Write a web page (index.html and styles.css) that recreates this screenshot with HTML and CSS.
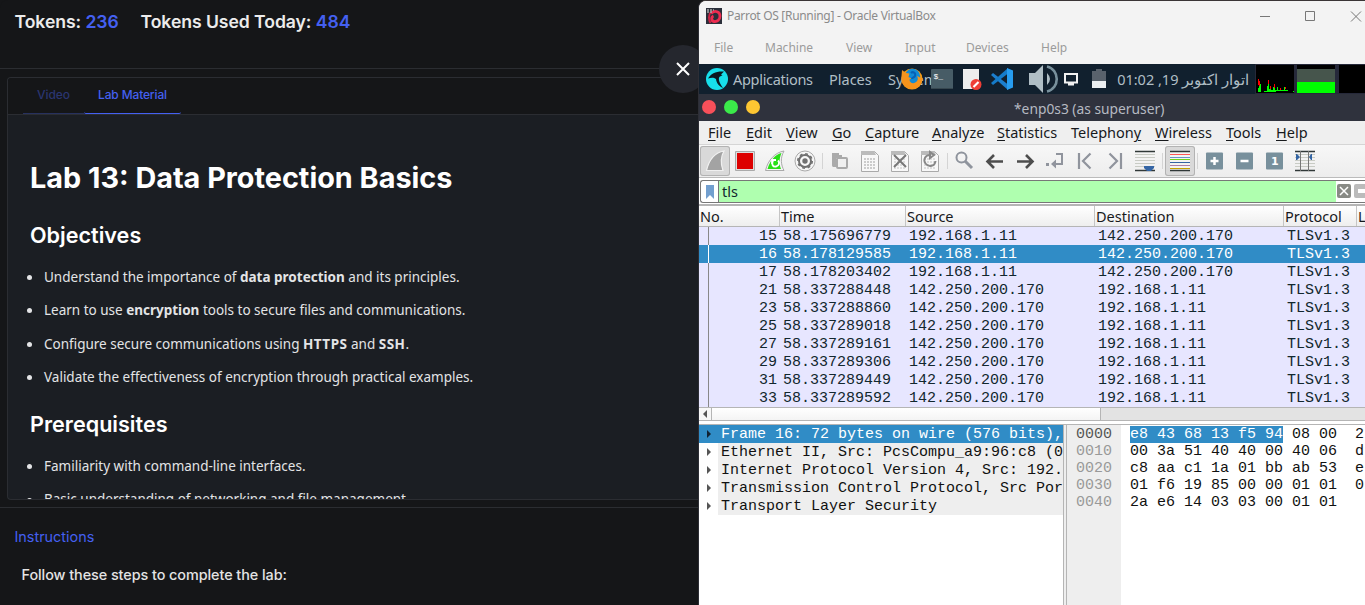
FILE: index.html
```html
<!DOCTYPE html>
<html lang="en">
<head>
<meta charset="utf-8">
<title>Lab 13</title>
<link rel="stylesheet" href="styles.css">
</head>
<body>
<div class="screen">
<main class="lab">
  <header class="tokens"><span class="tok1">Tokens: <b>236</b></span><span class="tok2">Tokens Used Today: <b>484</b></span></header>
  <section class="card">
    <nav class="tabs"><span class="tab video">Video</span><span class="tab active">Lab Material</span></nav>
    <div class="material">
      <h1>Lab 13: Data Protection Basics</h1>
      <h2 class="obj">Objectives</h2>
      <ul>
        <li><span class="l1">Understand the importance of <b>data protection</b> and its principles.</span></li>
        <li><span class="l2">Learn to use <b>encryption</b> tools to secure files and communications.</span></li>
        <li><span class="l3">Configure secure communications using <b>HTTPS</b> and <b>SSH</b>.</span></li>
        <li><span class="l4">Validate the effectiveness of encryption through practical examples.</span></li>
      </ul>
      <h2 class="pre">Prerequisites</h2>
      <ul>
        <li><span class="l5">Familiarity with command-line interfaces.</span></li>
        <li><span class="l6">Basic understanding of networking and file management.</span></li>
      </ul>
    </div>
  </section>
  <section class="instructions">
    <h3>Instructions</h3>
    <p>Follow these steps to complete the lab:</p>
  </section>
  <button class="close" aria-label="Close"><svg width="16" height="16" viewBox="0 0 16 16"><path d="M2 2l12 12M14 2L2 14" stroke="#fff" stroke-width="2" fill="none"/></svg></button>
</main>

<section class="vm">
  <header class="titlebar">
    <svg width="16" height="16" viewBox="0 0 16 16"><rect width="16" height="16" fill="#2b2f3a"/><path d="M5 5.500c4-4 9-1.500 9 2.500 0 4-3 6-6 5.500S5 9 7.500 8" fill="none" stroke="#ee2c50" stroke-width="2.800"/><path d="M4.500 4.500C2.500 7 2.500 12 4.500 15" fill="none" stroke="#c92445" stroke-width="2"/><path d="M1 2h7M1 4h5" stroke="#aaa" stroke-width="1.500" stroke-dasharray="2 1"/></svg>
    <span class="vmtitle">Parrot OS [Running] - Oracle VirtualBox</span>
    <svg class="winctl" width="106" height="12" viewBox="0 0 106 12"><path d="M0 6.500h10M45.500 1.500h9v9h-9zM91 1.500l10 10M101 1.500l-10 10" stroke="#777" fill="none"/></svg>
  </header>
  <nav class="vmmenu"><span>File</span><span>Machine</span><span>View</span><span>Input</span><span>Devices</span><span>Help</span></nav>

  <div class="panel">
    <svg class="parrot" width="22" height="22" viewBox="0 0 22 22"><circle cx="11" cy="11" r="11" fill="#17dfeb"/><path d="M2 10.500C5 5.500 10 3 18 3.500l-3 3 1.500.8-2.500 1.200c-2 1-1.500 5.500 3 11.500-4.500-2-6.500-5-7-9-2.500-2-5-1.500-8-.5z" fill="#0b1820"/></svg>
    <span class="p-app">Applications</span><span class="p-places">Places</span>
    <span class="p-system">System
      <svg class="firefox" width="22" height="22" viewBox="0 0 22 22"><circle cx="11" cy="11" r="10.500" fill="#f39a16"/><circle cx="11.500" cy="8.500" r="7.700" fill="#128bd6"/><path d="M1 2l4 3 3.500.5-1 3.500 3 1.500-2 1c0 4 5 5 7.500 1.500 1.500-2 .5-4 0-5 2 .5 3.500 2.500 5.500 2 0 6.500-4.500 11-10.500 11C3 21-.5 14 .5 8z" fill="#f7941c"/><path d="M10 5c2-2 5 0 4 3-1 2-3 1-3 3" stroke="#0761b6" fill="none" stroke-width="2"/></svg>
    </span>
    <svg class="term" width="22" height="20" viewBox="0 0 22 20"><rect width="22" height="20" rx="1" fill="#475c66"/><path d="M0 19h22v1H0z" fill="#37474f"/><text x="2.500" y="9.500" class="prompt">$_</text></svg>
    <svg class="note" width="19" height="21" viewBox="0 0 19 21"><path d="M0 0h16v20H0z" fill="#eee"/><circle cx="13" cy="15.500" r="5.500" fill="#ef3e36"/><path d="M10.500 18l5-5" stroke="#fff" stroke-width="2.200"/></svg>
    <svg class="code" width="22" height="22" viewBox="0 0 22 22"><path d="M0 7l2-2 15 11.500V22z" fill="#1c7fcf"/><path d="M0 15l2 2 15-11.500V0z" fill="#157bc9"/><path d="M16 0l6 2.500v17L16 22z" fill="#279df0"/></svg>
    <svg class="vol" width="30" height="28" viewBox="0 0 30 28"><path d="M0 8h6l8-8v28l-8-8H0z" fill="#b0bec5"/><path d="M18 8q6 6 0 12z" fill="#b0bec5"/><path d="M18 1.500c13 3 13 22 0 25" fill="none" stroke="#78909c" stroke-width="2.600"/></svg>
    <svg class="net" width="14" height="13" viewBox="0 0 14 13"><path d="M1 1h12v8.500H1zM4 11.500h6" stroke="#f1f1f1" stroke-width="2" fill="none"/></svg>
    <svg class="bat" width="14" height="20" viewBox="0 0 14 20"><path d="M0 2h4V0h6v2h4v17H0z" fill="#59626c"/><path d="M0 12h14v7H0z" fill="#eceff1"/></svg>
    <span class="clock" dir="rtl">اتوار اکتوبر 19, 01:02</span>
    <svg class="monitors" width="121" height="30" viewBox="0 0 121 30" shape-rendering="crispEdges"><path d="M0 0h121v30H0z" fill="#26293a"/><path d="M1 1h38v28H1zM42 1h38v28H42zM84 1h37v28H84z" fill="#000"/><path d="M1 28h2v-4h1v-3h1v-1h1v8zM9 28v-1h3v-5h1v-5h1v8h1v-2h1v3h2v-3h1v-2h1v5h2v-3h1v3h2v-2h1v2h3v-3h1v3h3v1zM38 27h1v1h-1z" fill="#0f0"/><path d="M3 15h1v6H3zM4 17h1v5H4zM13 16h1v4h-1zM15 22h1v3h-1zM19 20h1v4h-1zM25 24h1v2h-1zM30 23h1v2h-1z" fill="#f00"/><path d="M42 5h38v13H42z" fill="#46554c"/><path d="M42 18h38v11H42z" fill="#0f0"/></svg>
  </div>

  <header class="mac"><i class="r"></i><i class="g"></i><i class="y"></i><span>*enp0s3 (as superuser)</span></header>
  <nav class="wmenu"><span><u>F</u>ile</span><span><u>E</u>dit</span><span><u>V</u>iew</span><span><u>G</u>o</span><span><u>C</u>apture</span><span><u>A</u>nalyze</span><span><u>S</u>tatistics</span><span>Telephon<u>y</u></span><span><u>W</u>ireless</span><span><u>T</u>ools</span><span><u>H</u>elp</span></nav>

  <div class="toolbar">
    <span class="tool pressed"><svg viewBox="0 0 30 30"><path d="M6.500 24.500C9 14 15 6.500 24 5c-4 7-3 14-1 19.500z" fill="#a3a3a3" stroke="#f0f0f0" stroke-width="1.200"/></svg></span>
    <span class="tool"><svg viewBox="0 0 30 30"><path d="M5.500 5.500h19v19h-19z" fill="#ddd" stroke="#aaa"/><path d="M7 7h16v16H7z" fill="#d00"/></svg></span>
    <span class="tool"><svg viewBox="0 0 30 30"><path d="M5.500 24.500C8 14 15 6.500 24 5c-4 7-3 14 0 19.500z" fill="#f5f5f5" stroke="#aaa"/><path d="M7.500 23C10 14.500 15 8.500 21.500 7c-2.500 6-2.500 11-.5 16z" fill="#29df16"/><path d="M13 14.500c-2 4 0 6.500 3 6 3-.5 4-4 2-6M12 18v-4h4" fill="none" stroke="#fff" stroke-width="1.800"/></svg></span>
    <span class="tool"><svg viewBox="0 0 30 30"><circle cx="15" cy="15" r="10" fill="#f7f7f7" stroke="#aaa"/><circle cx="15" cy="15" r="6" fill="none" stroke="#707070" stroke-width="2"/><circle cx="15" cy="15" r="7.200" fill="none" stroke="#707070" stroke-width="1.600" stroke-dasharray="2.800 2.850"/><circle cx="15" cy="15" r="2.700" fill="#707070"/></svg></span>
    <i class="sep"></i>
    <span class="tool"><svg viewBox="0 0 30 30"><path d="M7 7h7v2h3v3h-6v9H9c-1.500 0-2-.5-2-2z" fill="#aaa"/><rect x="12" y="12" width="10" height="10" rx="1" fill="#f0f0f0" stroke="#aaa" stroke-width="2"/></svg></span>
    <span class="tool"><svg viewBox="0 0 30 30"><path d="M6.500 5.500h13l4 4v16h-17z" fill="#f8f8f8" stroke="#aaa"/><path d="M6 5h13l2 4H6z" fill="#bbb"/><path d="M9 13h12M9 16h12M9 19h12M9 22h12" stroke="#ccc" stroke-width="2" stroke-dasharray="2 1"/></svg></span>
    <span class="tool"><svg viewBox="0 0 30 30"><path d="M6.500 5.500h13l4 4v16h-17z" fill="#f8f8f8" stroke="#aaa"/><path d="M6 5h13l2 4H6z" fill="#bbb"/><path d="M9 13h12M9 16h12M9 19h12M9 22h12" stroke="#ddd" stroke-width="2" stroke-dasharray="2 1"/><path d="M9 9l12 12M21 9L9 21" stroke="#777" stroke-width="2"/></svg></span>
    <span class="tool"><svg viewBox="0 0 30 30"><path d="M6.500 5.500h13l4 4v16h-17z" fill="#f8f8f8" stroke="#aaa"/><path d="M6 5h13l2 4H6z" fill="#bbb"/><path d="M9 13h12M9 16h12M9 19h12M9 22h12" stroke="#ddd" stroke-width="2" stroke-dasharray="2 1"/><path d="M15 9c-5 0-7 5-4.500 8.500C14 22 20 20 20.500 15M15 6v6l4-3z" fill="none" stroke="#888" stroke-width="2"/></svg></span>
    <i class="sep"></i>
    <span class="tool"><svg viewBox="0 0 30 30"><circle cx="11.500" cy="11.500" r="5" fill="none" stroke="#8f949d" stroke-width="2"/><path d="M15 15l7 7" stroke="#8f949d" stroke-width="3"/></svg></span>
    <span class="tool"><svg viewBox="0 0 30 30"><path d="M23 15.500H8M14 9l-6.500 6.500L14 22" fill="none" stroke="#4d4d4d" stroke-width="2.600"/></svg></span>
    <span class="tool"><svg viewBox="0 0 30 30"><path d="M7 15.500h15M16 9l6.500 6.500L16 22" fill="none" stroke="#4d4d4d" stroke-width="2.600"/></svg></span>
    <span class="tool"><svg viewBox="0 0 30 30"><path d="M16 8h6v10H12" fill="none" stroke="#90949d" stroke-width="2"/><path d="M11 18l5-4.500v9z" fill="#90949d"/><path d="M6 17h3v3H6z" fill="#90949d"/></svg></span>
    <span class="tool"><svg viewBox="0 0 30 30"><path d="M9 7v16M20.500 7.500L13 15l7.500 7.500" fill="none" stroke="#90949d" stroke-width="2.200"/></svg></span>
    <span class="tool"><svg viewBox="0 0 30 30"><path d="M21 7v16M9.500 7.500L17 15l-7.500 7.500" fill="none" stroke="#90949d" stroke-width="2.200"/></svg></span>
    <span class="tool"><svg viewBox="0 0 30 30"><path d="M5 5.500h20M5 24.500h20" stroke="#303838" stroke-width="1.300"/><path d="M5 8.500h20M5 11.500h20M5 14.500h20M5 17.500h20M5 20.500h20" stroke="#c8cbc4"/><path d="M14 20h10v2l-3 3h-4l-3-3z" fill="#3465a4"/></svg></span>
    <i class="sep"></i>
    <span class="tool pressed"><svg viewBox="0 0 30 30"><path d="M5 5h20v20H5z" fill="#f4f4f2"/><path d="M5 5.500h20M5 24.500h20" stroke="#303838" stroke-width="1.300"/><path d="M5 8.500h20" stroke="#ff5555"/><path d="M5 11.500h20" stroke="#6a93c4"/><path d="M5 13.500h20" stroke="#73d216"/><path d="M5 16.500h20" stroke="#3465a4"/><path d="M5 19.500h20" stroke="#ad7fa8"/><path d="M5 22.500h20" stroke="#c4a000"/></svg></span>
    <i class="sep"></i>
    <span class="tool"><svg viewBox="0 0 30 30"><rect x="6" y="6.500" width="17" height="17" rx="1" fill="#78909c"/><path d="M10.500 15h8M14.500 11v8" stroke="#fff" stroke-width="2.500"/></svg></span>
    <span class="tool"><svg viewBox="0 0 30 30"><rect x="6" y="6.500" width="17" height="17" rx="1" fill="#78909c"/><path d="M10.500 15h8" stroke="#fff" stroke-width="2.500"/></svg></span>
    <span class="tool"><svg viewBox="0 0 30 30"><rect x="6" y="6.500" width="17" height="17" rx="1" fill="#78909c"/><text x="11" y="19" class="one">1</text></svg></span>
    <span class="tool"><svg viewBox="0 0 30 30"><path d="M5 5.500h20M5 24.500h20" stroke="#303838" stroke-width="1.300"/><path d="M5 8.500h20M5 11.500h20M5 14.500h20M5 17.500h20M5 20.500h20" stroke="#c8cbc4"/><path d="M10.500 5v20M18.500 5v20" stroke="#777"/><path d="M6 8h1l3 3-3 3H6zM22 8h-1l-2 3 2 3h1z" fill="#3465a4"/></svg></span>
  </div>

  <div class="filter"><span class="bookmark"><svg width="10" height="14" viewBox="0 0 10 14"><path d="M1 0h8v14l-4-4-4 4z" fill="#729fcf"/></svg></span><span class="query">tls</span><svg class="clear" width="28" height="14" viewBox="0 0 28 14"><rect width="14" height="14" rx="2" fill="#888a85"/><path d="M3 3l8 8M11 3l-8 8" stroke="#fff" stroke-width="1.500"/><rect x="17" width="16" height="14" rx="2" fill="#bbb"/><path d="M21 7h9" stroke="#fff" stroke-width="4"/></svg></div>

  <div class="packets">
    <div class="prow head"><span>No.</span><span>Time</span><span>Source</span><span>Destination</span><span>Protocol</span><span>L</span></div>
    <div class="prow"><span>15</span><span>58.175696779</span><span>192.168.1.11</span><span>142.250.200.170</span><span>TLSv1.3</span></div>
    <div class="prow sel"><span>16</span><span>58.178129585</span><span>192.168.1.11</span><span>142.250.200.170</span><span>TLSv1.3</span></div>
    <div class="prow"><span>17</span><span>58.178203402</span><span>192.168.1.11</span><span>142.250.200.170</span><span>TLSv1.3</span></div>
    <div class="prow"><span>21</span><span>58.337288448</span><span>142.250.200.170</span><span>192.168.1.11</span><span>TLSv1.3</span></div>
    <div class="prow"><span>23</span><span>58.337288860</span><span>142.250.200.170</span><span>192.168.1.11</span><span>TLSv1.3</span></div>
    <div class="prow"><span>25</span><span>58.337289018</span><span>142.250.200.170</span><span>192.168.1.11</span><span>TLSv1.3</span></div>
    <div class="prow"><span>27</span><span>58.337289161</span><span>142.250.200.170</span><span>192.168.1.11</span><span>TLSv1.3</span></div>
    <div class="prow"><span>29</span><span>58.337289306</span><span>142.250.200.170</span><span>192.168.1.11</span><span>TLSv1.3</span></div>
    <div class="prow"><span>31</span><span>58.337289449</span><span>142.250.200.170</span><span>192.168.1.11</span><span>TLSv1.3</span></div>
    <div class="prow"><span>33</span><span>58.337289592</span><span>142.250.200.170</span><span>192.168.1.11</span><span>TLSv1.3</span></div>
  </div>
  <div class="hscroll"><span class="arrow"><svg width="4" height="8" viewBox="0 0 4 8"><path d="M4 0v8L0 4z" fill="#555"/></svg></span><span class="thumb"></span></div>

  <div class="details">
    <div class="tree">
      <div class="trow on"><svg width="4" height="8" viewBox="0 0 4 8"><path d="M0 0v8l4-4z" fill="#123"/></svg><span>Frame 16: 72 bytes on wire (576 bits),</span></div>
      <div class="trow"><svg width="4" height="8" viewBox="0 0 4 8"><path d="M0 0v8l4-4z" fill="#555"/></svg><span>Ethernet II, Src: PcsCompu_a9:96:c8 (0</span></div>
      <div class="trow"><svg width="4" height="8" viewBox="0 0 4 8"><path d="M0 0v8l4-4z" fill="#555"/></svg><span>Internet Protocol Version 4, Src: 192.</span></div>
      <div class="trow"><svg width="4" height="8" viewBox="0 0 4 8"><path d="M0 0v8l4-4z" fill="#555"/></svg><span>Transmission Control Protocol, Src Por</span></div>
      <div class="trow"><svg width="4" height="8" viewBox="0 0 4 8"><path d="M0 0v8l4-4z" fill="#555"/></svg><span>Transport Layer Security</span></div>
    </div>
    <div class="split"></div>
    <div class="hex">
      <div class="offsets"><b>0000</b><span>0010</span><span>0020</span><span>0030</span><span>0040</span></div>
      <pre class="bytes"><mark>e8 43 68 13 f5 94</mark> 08 00  2
00 3a 51 40 40 00 40 06  d
c8 aa c1 1a 01 bb ab 53  e
01 f6 19 85 00 00 01 01  0
2a e6 14 03 03 00 01 01</pre>
    </div>
  </div>
</section>
</div>
</body>
</html>
```
FILE: styles.css
```css
* { box-sizing: border-box; }
body { margin: 0; background: #151618; overflow: hidden; font-family: "Noto Sans", sans-serif; }
.screen { width: 1365px; height: 605px; display: grid; grid-template-columns: 698px 667px; overflow: hidden; white-space: nowrap; }
h1, h2, h3, p, ul, pre { margin: 0; }

.lab { position: relative; height: 605px; background: #151618; color: #fff; font-family: Inter, sans-serif; border-top-left-radius: 8px; }
.tokens { height: 69px; padding: 11px 0 0 14.500px; border-bottom: 1px solid #2b2d31; font-size: 17.600px; letter-spacing: -0.060px; line-height: 22px; font-weight: 600; color: #ececec; display: flex; }
.tokens b { color: #4460f1; font-weight: 600; }
.tok1 { width: 126px; }
.card { margin: 8px 0 0 7px; height: 423px; border: 1px solid #2b2d32; border-right: 0; border-radius: 4px 0 0 4px; background: #1b1e23; overflow: hidden; }
.tabs { height: 37px; padding-left: 15px; display: flex; background: #151618; border-bottom: 1px solid #2b2d32; font-size: 12px; letter-spacing: -0.150px; line-height: 34px; font-weight: 500; }
.tab { height: 36px; color: #2a3570; text-align: center; border-bottom: 1px solid #27315e; }
.video { width: 61px; letter-spacing: 0; }
.active { width: 97px; color: #4460f1; border-color: #4460f1; border-radius: 2px; }
.material { padding: 44px 0 0 22px; }
h1 { font-size: 28.800px; line-height: 38px; font-weight: 700; }
h2 { font-size: 21.600px; line-height: 30px; font-weight: 600; }
.obj { margin-top: 23px; }
.pre { margin-top: 15px; }
ul { list-style: none; padding: 11px 0 0; font: 13.500px/33.300px "Noto Sans", sans-serif; color: #e3e4e6; }
li { display: flex; align-items: center; height: 33.300px; }
li::before { content: ""; width: 5px; height: 5px; border-radius: 50%; background: #e3e4e6; margin: 0 12px 0 -3px; }
.l3 b { letter-spacing: 0.500px; }
.instructions { margin-top: 7px; border-top: 1px solid #2b2d31; padding: 18px 0 0 14.500px; }
h3 { font-size: 14.400px; line-height: 22px; font-weight: 400; color: #4460f1; }
.instructions p { margin: 16px 0 0 7px; font-size: 14.400px; letter-spacing: -0.060px; line-height: 22px; font-weight: 500; color: #e4e4e4; }
.close { position: absolute; left: 659px; top: 45px; width: 48px; height: 48px; padding: 0; border: 0; border-radius: 50%; background: #25272e; display: flex; align-items: center; justify-content: center; }

.vm { position: relative; border-left: 1px solid #2d2e35; border-top: 1px solid #3a3536; height: 605px; overflow: hidden; border-top-left-radius: 8px; background: #fff; display: flex; flex-direction: column; }
.vm > * { flex-shrink: 0; }
.titlebar { height: 29px; background: #f3f3f3; display: flex; align-items: center; padding-left: 7px; color: #8b8b8b; font: 12px "Noto Sans", sans-serif; letter-spacing: -0.310px; }
.vmtitle { margin-left: 5px; flex: 1; }
.winctl { margin-right: -1px; }
.vmmenu { height: 34px; background: #f3f3f3; display: flex; color: #9b9b9b; font: 12px/36px "Noto Sans", sans-serif; padding-left: 15px; }
.vmmenu span:nth-child(1) { width: 51px; }
.vmmenu span:nth-child(2) { width: 81px; }
.vmmenu span:nth-child(3) { width: 59px; }
.vmmenu span:nth-child(4) { width: 61px; }
.vmmenu span:nth-child(5) { width: 75px; }

.panel { height: 30px; background: #11202e; display: flex; align-items: center; padding-left: 7px; color: #b0bec5; font-size: 14.500px; line-height: 20px; }
.panel > * { flex-shrink: 0; }
.p-app { margin-left: 5px; width: 96px; letter-spacing: -0.300px; }
.p-places { width: 59px; }
.p-system { position: relative; width: 43px; }
.firefox { position: absolute; left: 13px; top: -1px; }
.term { position: relative; }
.prompt { font: 8px "Liberation Mono", monospace; fill: #fff; }
.note { margin-left: 10px; }
.code { margin-left: 9px; }
.vol { margin-left: 16px; }
.net { margin-left: 5px; }
.bat { margin-left: 14px; }
.clock { margin-left: 13px; width: 130px; text-align: left; }
.monitors { margin-left: 6px; }

.mac { height: 27px; background: #2f323d; display: flex; align-items: center; padding-left: 3px; color: #b6bac2; font-size: 13.800px; }
.mac i { width: 14px; height: 14px; border-radius: 50%; margin: -2px 8px 0 0; }
.r { background: #f9505a; }
.g { background: #3bea4a; }
.y { background: #fdc632; }
.mac span { margin-left: 246px; padding-top: 1px; }
.wmenu { height: 24px; background: #efefef; border-bottom: 1px solid #d5d5d5; display: flex; padding-left: 9px; font-size: 14.500px; line-height: 22px; color: #17191c; }
.wmenu u { text-underline-offset: 2px; }
.wmenu span:nth-child(1) { width: 38px; }
.wmenu span:nth-child(2) { width: 40px; }
.wmenu span:nth-child(3) { width: 46px; }
.wmenu span:nth-child(4) { width: 33px; }
.wmenu span:nth-child(5) { width: 67px; }
.wmenu span:nth-child(6) { width: 65px; }
.wmenu span:nth-child(7) { width: 74px; }
.wmenu span:nth-child(8) { width: 84px; }
.wmenu span:nth-child(9) { width: 71px; }
.wmenu span:nth-child(10) { width: 50px; }

.toolbar { height: 33px; background: linear-gradient(#f7f7f7, #ededed); display: flex; align-items: center; padding-left: 1px; border-bottom: 1px solid #bbb; }
.tool { width: 30px; height: 30px; }
.tool svg { display: block; width: 30px; height: 30px; }
.pressed { border-radius: 3px; background: #d9d9d9; box-shadow: inset 0 0 0 1px #b3b3b3; }
.sep { width: 1px; height: 16px; background: #d4d4d4; margin: 0 2px; }
.one { font: bold 11px "DejaVu Sans", sans-serif; fill: #fff; }

.filter { height: 23px; margin: 2px 0 0 1px; border: 1px solid #777; border-right: 0; border-radius: 3px 0 0 3px; display: flex; background: #fff; align-items: stretch; }
.filter > * { flex-shrink: 0; }
.bookmark { width: 18px; border-right: 1px solid #777; display: flex; align-items: center; justify-content: center; }
.query { width: 617px; background: #afffaf; padding-left: 3px; font-size: 14.500px; line-height: 21px; color: #12272e; }
.clear { margin: 3px 0 0 1px; }

.packets { margin-top: 1px; border-top: 2px solid #b5b5b5; background: #e7e6ff; }
.prow { height: 18px; line-height: 19px; display: grid; grid-template-columns: 80px 126px 189px 189px 72px 30px; font-family: "Liberation Mono", monospace; font-size: 15px; color: #12272e; }
.prow span { height: 18px; }
.prow span:nth-child(1) { border-left: 1px solid #888; margin-left: 9px; padding-right: 2px; text-align: right; }
.prow span:nth-child(n+2) { padding-left: 4px; }
.sel { background: #308cc6; color: #fff; }
.prow.sel span:first-child { border-color: #fff; }
.prow.head { height: 21px; line-height: 20px; grid-template-columns: 81px 126px 189px 189px 73px 30px; background: linear-gradient(#fff, #eee); border-bottom: 1px solid #b5b5b5; font-family: "Noto Sans", sans-serif; font-size: 14.500px; color: #17191c; }
.prow.head span { height: 20px; margin: 0; padding: 0 0 0 1px; border: 0; border-right: 1px solid #c5c5c5; text-align: left; }
.hscroll { height: 14px; background: #e3e3e3; border-top: 1px solid #b5b5b5; border-bottom: 1px solid #b5b5b5; display: flex; }
.arrow { width: 13px; border-right: 1px solid #b5b5b5; background: #f7f7f7; display: flex; align-items: center; justify-content: center; }
.thumb { width: 389px; background: linear-gradient(#fff, #f4f4f4); border-right: 1px solid #b5b5b5; }

.details { flex: 1; margin-top: 3px; border-top: 1px solid #b5b5b5; display: flex; font: 15px "Liberation Mono", monospace; color: #111; }
.tree { width: 364px; overflow: hidden; background: #fff; }
.trow { height: 18px; line-height: 19px; display: flex; align-items: center; padding-left: 8px; }
.trow svg { flex-shrink: 0; }
.trow span { height: 18px; margin-left: 7px; padding-left: 3px; flex: 1 0 auto; background: #eee; }
.trow.on, .trow.on span { background: #308cc6; color: #fff; }
.split { width: 4px; background: #eee; border-left: 1px solid #b5b5b5; border-right: 1px solid #b5b5b5; }
.hex { flex: 1; display: flex; overflow: hidden; line-height: 17px; }
.offsets { width: 54px; background: #eee; padding: 1px 0 0 9px; color: #999; display: flex; flex-direction: column; }
.offsets b { font-weight: 400; color: #555; }
.bytes { font: inherit; padding-top: 1px; margin-left: 9px; }
.bytes mark { background: #308cc6; color: #fff; }
```
